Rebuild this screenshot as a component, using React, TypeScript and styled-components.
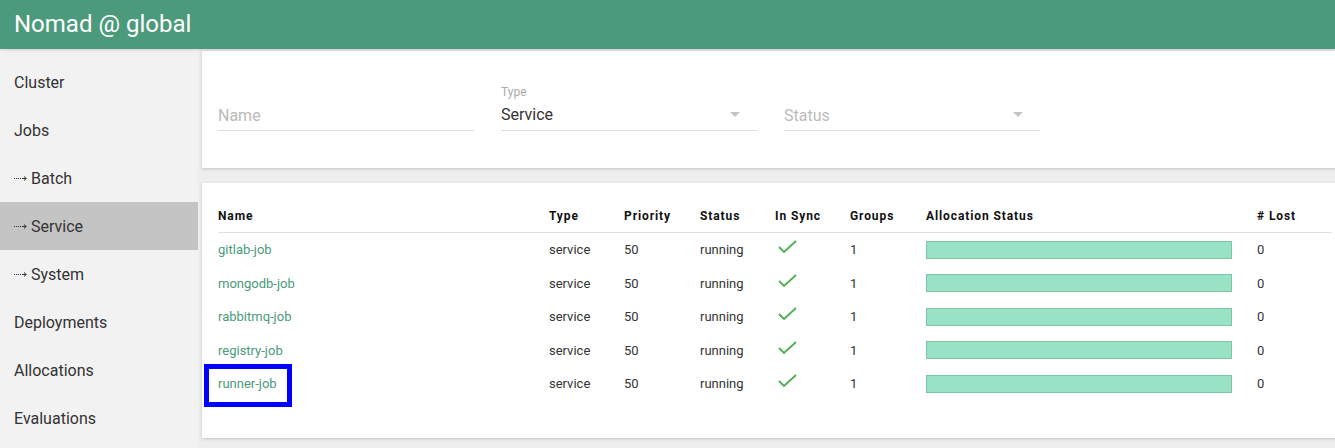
import styled, { createGlobalStyle } from "styled-components";

// 잡 목록 한 줄
interface IJob {
  name: string;
  type: string;
  priority: number;
  status: string;
  groups: number;
  lost: number;
}

const jobs: IJob[] = [
  { name: "gitlab-job", type: "service", priority: 50, status: "running", groups: 1, lost: 0 },
  { name: "mongodb-job", type: "service", priority: 50, status: "running", groups: 1, lost: 0 },
  { name: "rabbitmq-job", type: "service", priority: 50, status: "running", groups: 1, lost: 0 },
  { name: "registry-job", type: "service", priority: 50, status: "running", groups: 1, lost: 0 },
  { name: "runner-job", type: "service", priority: 50, status: "running", groups: 1, lost: 0 },
];

const menu = [
  { label: "Cluster" },
  { label: "Jobs" },
  { label: "Batch", sub: true },
  { label: "Service", sub: true, active: true },
  { label: "System", sub: true },
  { label: "Deployments" },
  { label: "Allocations" },
  { label: "Evaluations" },
];

const columns = ["Name", "Type", "Priority", "Status", "In Sync", "Groups", "Allocation Status", "# Lost"];

// 점선 화살표 (하위 메뉴 표시)
function DottedArrow() {
  return (
    <svg width="13" height="7" viewBox="0 0 13 7" fill="none">
      <rect x="0" y="3" width="1" height="1" fill="#333" />
      <rect x="2" y="3" width="1" height="1" fill="#333" />
      <rect x="4" y="3" width="1" height="1" fill="#333" />
      <rect x="6" y="3" width="1" height="1" fill="#333" />
      <line x1="8" y1="3.5" x2="12" y2="3.5" stroke="#333" strokeWidth="1" />
      <polyline points="10,1.5 12.3,3.5 10,5.5" stroke="#333" strokeWidth="1" />
    </svg>
  );
}

function CheckMark() {
  return (
    <svg width="19" height="13" viewBox="0 0 19 13" fill="none">
      <polyline points="1,7 6,12 18,1" stroke="#4caf50" strokeWidth="1.8" />
    </svg>
  );
}

function App() {
  return (
    <>
      <GlobalStyle />
      <TopBar>Nomad @ global</TopBar>
      <Body>
        <Sidebar>
          {menu.map((item) => (
            <MenuItem key={item.label} $active={item.active}>
              {item.sub && (
                <Arrow>
                  <DottedArrow />
                </Arrow>
              )}
              {item.label}
            </MenuItem>
          ))}
        </Sidebar>
        <Main>
          <FilterCard>
            <Field>
              <Label />
              <Input>
                <Placeholder>Name</Placeholder>
              </Input>
            </Field>
            <Field>
              <Label>Type</Label>
              <Input>
                <Value>Service</Value>
                <Caret />
              </Input>
            </Field>
            <Field>
              <Label />
              <Input>
                <Placeholder>Status</Placeholder>
                <Caret />
              </Input>
            </Field>
          </FilterCard>
          <TableCard>
            <HeadRow>
              {columns.map((c) => (
                <HeadCell key={c}>{c}</HeadCell>
              ))}
            </HeadRow>
            {jobs.map((job, i) => (
              <Row key={job.name}>
                <Cell>
                  <JobLink>{job.name}</JobLink>
                  {i === jobs.length - 1 && <Highlight />}
                </Cell>
                <Cell>{job.type}</Cell>
                <Cell>{job.priority}</Cell>
                <Cell>{job.status}</Cell>
                <Cell>
                  <Sync>
                    <CheckMark />
                  </Sync>
                </Cell>
                <Cell>{job.groups}</Cell>
                <Cell>
                  <Bar />
                </Cell>
                <Cell>{job.lost}</Cell>
              </Row>
            ))}
          </TableCard>
        </Main>
      </Body>
    </>
  );
}

export default App;

const GlobalStyle = createGlobalStyle`
  body {
    margin: 0;
    font-family: Roboto, "Liberation Sans", sans-serif;
    background: #eeeeee;
    overflow: hidden;
  }
`;

const TopBar = styled.header`
  height: 49px;
  background-color: #4c9a7c;
  color: #ffffff;
  font-size: 24px;
  line-height: 49px;
  padding-left: 14px;
  box-shadow: 0 1px 3px rgba(0, 0, 0, 0.15);
  position: relative;
  z-index: 1;
`;

const Body = styled.div`
  display: flex;
  gap: 4px;
  height: 399px;
`;

const Sidebar = styled.nav`
  width: 198px;
  flex-shrink: 0;
  background-color: #f2f2f2;
  padding-top: 9px;
`;

const MenuItem = styled.div<{ $active?: boolean }>`
  height: 48px;
  display: flex;
  align-items: center;
  padding-left: 14px;
  font-size: 16px;
  color: #333333;
  background-color: ${(props) => (props.$active ? "#c4c4c4" : "transparent")};
`;

const Arrow = styled.span`
  display: flex;
  align-items: center;
  margin-right: 4px;
  padding-top: 1px;
`;

const Main = styled.main`
  width: 1146px;
  flex-shrink: 0;
  padding-top: 2px;
`;

const FilterCard = styled.section`
  background: #ffffff;
  box-shadow: 0 1px 3px rgba(0, 0, 0, 0.18);
  padding: 34px 16px 37px;
  display: flex;
  gap: 27px;
`;

const Field = styled.div`
  width: 256px;
`;

const Label = styled.div`
  height: 14px;
  font-size: 12px;
  line-height: 14px;
  color: #aaaaaa;
`;

const Input = styled.div`
  height: 31px;
  border-bottom: 1px solid #dddddd;
  display: flex;
  align-items: center;
  justify-content: space-between;
  padding-right: 17px;
  font-size: 16px;
`;

const Placeholder = styled.span`
  color: #bbbbbb;
  padding-top: 2px;
`;

const Value = styled.span`
  color: #333333;
`;

const Caret = styled.span`
  width: 0;
  height: 0;
  border-left: 5px solid transparent;
  border-right: 5px solid transparent;
  border-top: 5px solid #c4c4c4;
`;

const TableCard = styled.section`
  margin-top: 15px;
  background: #ffffff;
  box-shadow: 0 1px 3px rgba(0, 0, 0, 0.18);
  padding: 16px 16px 37px;
`;

const grid = "331px 75px 76px 75px 75px 76px 331px 75px";

const HeadRow = styled.div`
  display: grid;
  grid-template-columns: ${grid};
  height: 33px;
  align-items: center;
  border-bottom: 1px solid #e0e0e0;
`;

const HeadCell = styled.div`
  font-size: 12px;
  font-weight: 700;
  letter-spacing: 0.9px;
  color: #111111;
`;

const Row = styled.div`
  display: grid;
  grid-template-columns: ${grid};
  height: 33.5px;
  align-items: center;
`;

const Cell = styled.div`
  position: relative;
  font-size: 13px;
  color: #333333;
`;

const JobLink = styled.a`
  color: #4a9a7c;
  text-decoration: none;
  cursor: pointer;
`;

const Highlight = styled.span`
  position: absolute;
  left: -14px;
  top: -12px;
  width: 88px;
  height: 43px;
  box-sizing: border-box;
  border: 5px solid #0000ff;
`;

const Sync = styled.span`
  display: block;
  padding-left: 3px;
  height: 13px;
  margin-top: -6px;
`;

const Bar = styled.div`
  width: 306px;
  height: 18px;
  box-sizing: border-box;
  background-color: #98e2c6;
  border: 1px solid #80c4a6;
`;
